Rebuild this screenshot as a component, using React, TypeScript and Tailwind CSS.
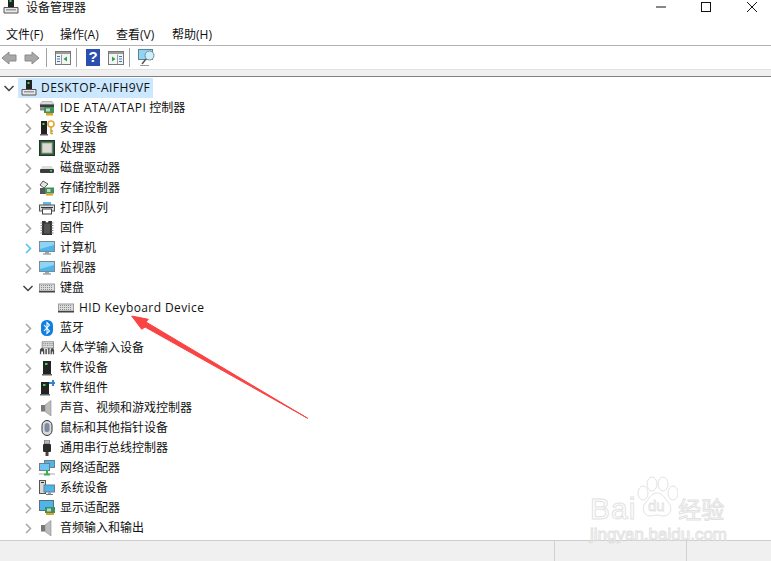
const font = "font-['Open_Sans','Noto_Sans_CJK_SC',sans-serif]";

const Tower = () => (
  <svg width="16" height="16" viewBox="0 0 16 16">
    <rect x="5" y="0" width="6" height="9" fill="#222" />
    <rect x="6.5" y="2" width="2" height="2" fill="#3fd06a" />
    <path d="M1 9.5h14v5.5H1z" fill="#e8e8e8" stroke="#555" />
    <rect x="3" y="11" width="10" height="1.5" fill="#9a9a9a" />
  </svg>
);

const Ide = () => (
  <svg width="16" height="16" viewBox="0 0 16 16">
    <path d="M1 4.5 3 1.5h10l2 3z" fill="#d9d9d9" stroke="#999" strokeWidth=".6" />
    <rect x="1" y="4.5" width="14" height="3" fill="#3c3c3c" />
    <rect x="5" y="7" width="10" height="6" fill="#3f8f5f" />
    <rect x="7" y="8.5" width="4" height="3" fill="#bcd9c4" />
    <rect x="7" y="13" width="7" height="2.5" fill="#e0a020" />
    <rect x="1" y="7.5" width="4" height="3" fill="#888" />
  </svg>
);

const Security = () => (
  <svg width="16" height="16" viewBox="0 0 16 16">
    <rect x="2" y="1" width="6" height="13" fill="#222" />
    <rect x="3.5" y="3" width="2" height="2" fill="#3fd06a" />
    <rect x="1" y="14" width="8" height="1.5" fill="#666" />
    <circle cx="12" cy="4" r="3" fill="none" stroke="#e0a83a" strokeWidth="1.6" />
    <path d="M12 7v7M12 11h2M12 13.5h2" stroke="#d09a30" strokeWidth="1.4" />
  </svg>
);

const Cpu = () => (
  <svg width="16" height="16" viewBox="0 0 16 16">
    <rect x=".5" y=".5" width="15" height="15" fill="#2f5a3a" stroke="#1f3a28" />
    <rect x="3" y="3" width="10" height="10" fill="#dcdcd4" stroke="#a8a8a0" />
  </svg>
);

const Disk = () => (
  <svg width="16" height="16" viewBox="0 0 16 16">
    <path d="M1.5 9 3.5 6h9l2 3z" fill="#dcdcdc" />
    <rect x="1" y="9" width="14" height="4" rx="1" fill="#3c3c3c" />
    <rect x="11" y="10" width="2" height="1.5" fill="#3fd06a" />
  </svg>
);

const Storage = () => (
  <svg width="16" height="16" viewBox="0 0 16 16">
    <path d="M4 1 9 4 5 8 1 5z" fill="#e4e4e4" stroke="#333" strokeWidth=".8" />
    <rect x="1" y="8" width="6" height="6" fill="#555" />
    <rect x="6" y="7.5" width="9" height="6" fill="#3f8f5f" />
    <rect x="8" y="9" width="3.5" height="3" fill="#bcd9c4" />
    <rect x="7" y="13.5" width="7" height="2" fill="#e0a020" />
  </svg>
);

const Printer = () => (
  <svg width="16" height="16" viewBox="0 0 16 16">
    <rect x="4" y="2" width="8" height="4" fill="#63b7e8" />
    <rect x=".5" y="5" width="15" height="6" fill="#dedede" stroke="#555" />
    <rect x="2" y="7" width="12" height="1" fill="#333" />
    <rect x="3.500" y="9" width="9" height="5" fill="#fff" stroke="#444" />
  </svg>
);

const Chip = () => (
  <svg width="16" height="16" viewBox="0 0 16 16">
    <path d="M3 1h3.5a1.5 1.5 0 0 0 3 0H13v14H3z" fill="#333" />
    <path d="M1.5 3h2M1.5 5.5h2M1.5 8h2M1.5 10.5h2M1.5 13h2M12.5 3h2M12.5 5.5h2M12.5 8h2M12.5 10.5h2M12.5 13h2" stroke="#888" />
    <rect x="5" y="3.5" width="6" height="10" fill="#555" />
  </svg>
);

const Monitor = () => (
  <svg width="16" height="16" viewBox="0 0 16 16">
    <rect x=".5" y="1.5" width="15" height="10" fill="#4db5ea" stroke="#7a8a95" />
    <path d="M1 2h14v3L1 9z" fill="#8fd4f5" />
    <rect x="6" y="12" width="4" height="1.5" fill="#9aa6ae" />
    <rect x="4" y="13.5" width="8" height="1" fill="#6f7b84" />
  </svg>
);

const Keyboard = () => (
  <svg width="16" height="16" viewBox="0 0 16 16">
    <rect x=".5" y="4" width="15" height="7" fill="#dcdcdc" stroke="#9a9a9a" />
    <path d="M2 5.5h12M2 7.5h12M2 9.5h12" stroke="#8c8c8c" strokeDasharray="1 1" />
    <rect x="0" y="11" width="16" height="1.5" fill="#444" />
  </svg>
);

const Bluetooth = () => (
  <svg width="16" height="16" viewBox="0 0 16 16">
    <rect x="2" y="0" width="12" height="16" rx="5.5" fill="#0f7fe0" />
    <path d="M5 5l5.5 6L8 13.5v-11L10.500 5 5 11" fill="none" stroke="#fff" strokeWidth="1.1" />
  </svg>
);

const Hid = () => (
  <svg width="18" height="16" viewBox="0 0 18 16">
    <rect x="3.500" y="1" width="13" height="7" fill="#dcdcdc" stroke="#777" strokeWidth=".8" />
    <path d="M5 3h11M5 5h11" stroke="#777" strokeDasharray="1 1" />
    <path d="M1 15V11q0-3 2.500-3T6 11v4H4.500v-3h-2v3z" fill="#4a4a4a" />
    <path d="M7 15V9h2v6zM10 15V8h2v7z" fill="#666" />
    <path d="M13 15V11q0-3 2-3t2 3v4h-1.500v-3h-1v3z" fill="#4a4a4a" />
  </svg>
);

const Software = () => (
  <svg width="16" height="16" viewBox="0 0 16 16">
    <rect x="4" y="1" width="8" height="13" fill="#222" />
    <rect x="6" y="3" width="2.500" height="2" fill="#3fd06a" />
    <rect x="3" y="14" width="10" height="1.500" fill="#666" />
  </svg>
);

const Component = () => (
  <svg width="16" height="16" viewBox="0 0 16 16">
    <rect x="2" y="2" width="8" height="12" fill="#222" />
    <rect x="4" y="4" width="2.500" height="2" fill="#3fd06a" />
    <rect x="1" y="14" width="10" height="1.500" fill="#666" />
    <path d="M10 2h3V0h2v2h1v2h-1v2h-2V4h-3z" fill="#2f87d0" />
  </svg>
);

const Speaker = () => (
  <svg width="16" height="16" viewBox="0 0 16 16">
    <rect x="2" y="5" width="4" height="6.500" fill="#777" />
    <path d="M6 5l6-4.500v15.500l-6-4.500z" fill="#bcbcbc" stroke="#8a8a8a" strokeWidth=".6" />
  </svg>
);

const Mouse = () => (
  <svg width="16" height="16" viewBox="0 0 16 16">
    <rect x="3" y="0.500" width="10" height="15" rx="5" fill="#d4dae2" stroke="#333" />
    <rect x="5.500" y="3" width="5" height="9" rx="2.500" fill="#7f8a9a" />
  </svg>
);

const Usb = () => (
  <svg width="16" height="16" viewBox="0 0 16 16">
    <rect x="5.500" y="0" width="5" height="4" fill="#b8b8b8" stroke="#555" strokeWidth=".6" />
    <rect x="4" y="4" width="8" height="8" rx="1" fill="#2b2b2b" />
    <rect x="6.500" y="12" width="3" height="4" fill="#444" />
  </svg>
);

const Network = () => (
  <svg width="16" height="16" viewBox="0 0 16 16">
    <rect x="5.500" y="0.500" width="10" height="7" fill="#4db5ea" stroke="#6f7f8a" />
    <rect x="0.500" y="3.500" width="10" height="7" fill="#6cc4f0" stroke="#6f7f8a" />
    <path d="M0 14h16" stroke="#c8c8c8" strokeWidth="1.500" />
    <path d="M8 10v4M5 14.500h6" stroke="#3fb050" strokeWidth="2" />
  </svg>
);

const SystemDev = () => (
  <svg width="16" height="16" viewBox="0 0 16 16">
    <rect x="0.500" y="0.500" width="6" height="13" fill="#d8d8d8" stroke="#555" />
    <rect x="2" y="2" width="3" height="1" fill="#333" />
    <rect x="5" y="5" width="10.500" height="7" fill="#4db5ea" stroke="#6f7f8a" />
    <rect x="9" y="12" width="3" height="2" fill="#9aa6ae" />
    <rect x="7" y="14" width="7" height="1" fill="#6f7b84" />
  </svg>
);

const Display = () => (
  <svg width="16" height="16" viewBox="0 0 16 16">
    <rect x=".5" y="0.500" width="14" height="10" fill="#4db5ea" stroke="#5f6f7a" />
    <rect x="6" y="7" width="10" height="6" fill="#3f8f5f" />
    <rect x="8" y="8.500" width="4" height="3" fill="#bcd9c4" />
    <rect x="7" y="13" width="8" height="2" fill="#e0a020" />
  </svg>
);

type Item = { label: React.ReactNode; icon: () => React.ReactElement; blue?: boolean };

const before: Item[] = [
  { label: <><span className="tracking-[0.45px]">IDE ATA/ATAPI</span> 控制器</>, icon: Ide },
  { label: "安全设备", icon: Security },
  { label: "处理器", icon: Cpu },
  { label: "磁盘驱动器", icon: Disk },
  { label: "存储控制器", icon: Storage },
  { label: "打印队列", icon: Printer },
  { label: "固件", icon: Chip },
  { label: "计算机", icon: Monitor, blue: true },
  { label: "监视器", icon: Monitor },
];

const after: Item[] = [
  { label: "蓝牙", icon: Bluetooth },
  { label: "人体学输入设备", icon: Hid },
  { label: "软件设备", icon: Software },
  { label: "软件组件", icon: Component },
  { label: "声音、视频和游戏控制器", icon: Speaker },
  { label: "鼠标和其他指针设备", icon: Mouse },
  { label: "通用串行总线控制器", icon: Usb },
  { label: "网络适配器", icon: Network },
  { label: "系统设备", icon: SystemDev },
  { label: "显示适配器", icon: Display },
  { label: "音频输入和输出", icon: Speaker },
];

const Closed = ({ blue }: { blue?: boolean }) => (
  <svg width="16" height="16" viewBox="0 0 16 16" className="shrink-0">
    <path d="M6 4l4.500 4.500L6 13" fill="none" stroke={blue ? "#4cc2f0" : "#a6a6a6"} strokeWidth="1.500" />
  </svg>
);

const Open = () => (
  <svg width="16" height="16" viewBox="0 0 16 16" className="shrink-0">
    <path d="M3.500 6l4.500 4.500L12.500 6" fill="none" stroke="#404040" strokeWidth="1.500" />
  </svg>
);

const Row = ({ item }: { item: Item }) => (
  <div className="flex h-5 items-center pl-5">
    <Closed blue={item.blue} />
    <div className="ml-[3px] flex w-4 shrink-0 justify-center"><item.icon /></div>
    <span className="ml-[5px]">{item.label}</span>
  </div>
);

const Arrow = () => (
  <svg width="190" height="110" viewBox="0 0 190 110" className="absolute left-[125px] top-[312px]">
    <path d="M6.700 4 23.300 7.300 21 10 182.700 106.300 20 15 16.700 17.300z" fill="#fa4343" stroke="#fa4343" strokeWidth="1" strokeLinejoin="round" />
  </svg>
);

const Watermark = () => (
  <div className="absolute left-[590px] top-[476px] w-[140px] font-['Liberation_Sans','Noto_Sans_CJK_SC',sans-serif] text-transparent [-webkit-text-stroke:1px_#e2e2e2]">
    <div className="flex h-[50px] items-end">
      <span className="text-[30px] leading-[34px] tracking-[1px]">Bai</span>
      <svg width="42" height="48" viewBox="0 0 42 48" className="mb-[2px] shrink-0">
        <g fill="none" stroke="#e2e2e2" strokeWidth="1">
          <ellipse cx="7" cy="17" rx="5" ry="7" />
          <ellipse cx="16" cy="8" rx="5" ry="7" />
          <ellipse cx="27" cy="8" rx="5" ry="7" />
          <ellipse cx="37" cy="17" rx="5" ry="7" />
          <path d="M21 17c6 0 8 6 11 9 5 5 3 14-4 14-3 0-5-1-7-1s-4 1-7 1c-7 0-9-9-4-14 3-3 5-9 11-9z" />
        </g>
        <text x="12" y="35" fontSize="15" fill="none" stroke="#e2e2e2" strokeWidth=".8">du</text>
      </svg>
      <span className="text-[23px] leading-[32px]">经验</span>
    </div>
    <div className="mt-[1px] text-[17px] leading-[16px] whitespace-nowrap">jingyan.baidu.com</div>
  </div>
);

export default function App() {
  return (
    <div className={`relative flex h-[561px] w-[771px] flex-col overflow-hidden bg-white text-[12px] text-[#111] ${font}`}>
      <div className="flex h-6 items-start">
        <div className="ml-[3px] -mt-[2px] w-4"><Tower /></div>
        <span className="ml-[7px] leading-4">设备管理器</span>
        <div className="ml-auto flex h-4 items-start">
          <svg width="12" height="12" viewBox="0 0 12 12" className="mr-[33px] mt-[1px]"><path d="M1 6h10" stroke="#111" /></svg>
          <svg width="12" height="12" viewBox="0 0 12 12" className="mr-[34px] mt-[1px]"><rect x="1.500" y="1.500" width="9" height="9" fill="none" stroke="#111" /></svg>
          <svg width="12" height="12" viewBox="0 0 12 12" className="mr-[13px] mt-[1px]"><path d="M1 1l10 10M11 1 1 11" stroke="#111" /></svg>
        </div>
      </div>

      <div className="flex h-[22px] items-center border-b border-[#b4b4b4] pl-[6px] leading-none">
        <span className="w-[54px]">文件(F)</span>
        <span className="w-[56px]">操作(A)</span>
        <span className="w-[56px]">查看(V)</span>
        <span>帮助(H)</span>
      </div>

      <div className="flex h-[23px] items-center pl-px">
        <svg width="16" height="16" viewBox="0 0 16 16"><path d="M8 2 1 8l7 6v-3h7V5H8z" fill="#a8a8a8" stroke="#8a8a8a" /></svg>
        <svg width="16" height="16" viewBox="0 0 16 16" className="ml-[7px]"><path d="M8 2l7 6-7 6v-3H1V5h7z" fill="#a8a8a8" stroke="#8a8a8a" /></svg>
        <div className="ml-[6px] h-[19px] w-px bg-[#a0a0a0]" />
        <svg width="16" height="16" viewBox="0 0 16 16" className="ml-2">
          <rect x=".5" y="1.500" width="15" height="13" fill="#f4f4f4" stroke="#777" />
          <rect x="1" y="2" width="14" height="2" fill="#9a9a9a" />
          <path d="M6.500 4.500v10" stroke="#999" />
          <path d="M2 6.500h3M2 9h3M2 11.500h3" stroke="#3b78c0" />
          <path d="M12 6.500v5L8.500 9z" fill="#30a050" />
        </svg>
        <div className="ml-[5px] h-[19px] w-px bg-[#a0a0a0]" />
        <div className="ml-[9px] flex h-[17px] w-[14px] items-center justify-center bg-[#2a4fb0] font-['Liberation_Sans'] text-[15px] font-bold text-white">?</div>
        <svg width="16" height="16" viewBox="0 0 16 16" className="ml-2">
          <rect x=".5" y="1.500" width="15" height="13" fill="#f4f4f4" stroke="#777" />
          <rect x="1" y="2" width="14" height="2" fill="#9a9a9a" />
          <path d="M9.500 4.500v10" stroke="#999" />
          <path d="M11 6.500h3M11 9h3M11 11.500h3" stroke="#3b78c0" />
          <path d="M4 6.500v5L7.500 9z" fill="#30a050" />
        </svg>
        <div className="ml-[5px] h-[19px] w-px bg-[#a0a0a0]" />
        <svg width="18" height="18" viewBox="0 0 18 18" className="ml-2">
          <rect x=".5" y=".5" width="14" height="10" fill="#8fd4f5" stroke="#5f7f95" />
          <circle cx="11.500" cy="6.500" r="4.500" fill="#cfeefc" stroke="#6f8f9f" />
          <path d="M8 10l-4 5" stroke="#555" strokeWidth="1.500" />
          <path d="M2 16.500h9" stroke="#9a9a9a" />
        </svg>
      </div>

      <div className="h-2 border-t border-b border-t-[#e2e2e2] border-b-[#808080] bg-[#f0f0f0]" />

      <div className="flex-1 pt-px">
        <div className="flex h-5 items-center pl-px">
          <Open />
          <div className="ml-px flex h-5 w-[135px] items-center bg-[#cce8ff] pl-[3px]">
            <Tower />
            <span className="ml-1 tracking-[0.45px]">DESKTOP-AIFH9VF</span>
          </div>
        </div>
        {before.map((item, i) => <Row key={i} item={item} />)}
        <div className="flex h-5 items-center pl-5">
          <Open />
          <div className="ml-[3px] w-4"><Keyboard /></div>
          <span className="ml-[5px]">键盘</span>
        </div>
        <div className="flex h-5 items-center pl-[58px]">
          <Keyboard />
          <span className="ml-[5px] tracking-[0.4px]">HID Keyboard Device</span>
        </div>
        {after.map((item, i) => <Row key={i} item={item} />)}
      </div>

      <div className="flex h-[21px] border-t border-[#cdcdcd] bg-[#f0f0f0]">
        <div className="w-[555px] border-r border-[#d0d0d0]" />
        <div className="w-[132px] border-r border-[#d0d0d0]" />
      </div>

      <Arrow />
      <Watermark />
    </div>
  );
}
